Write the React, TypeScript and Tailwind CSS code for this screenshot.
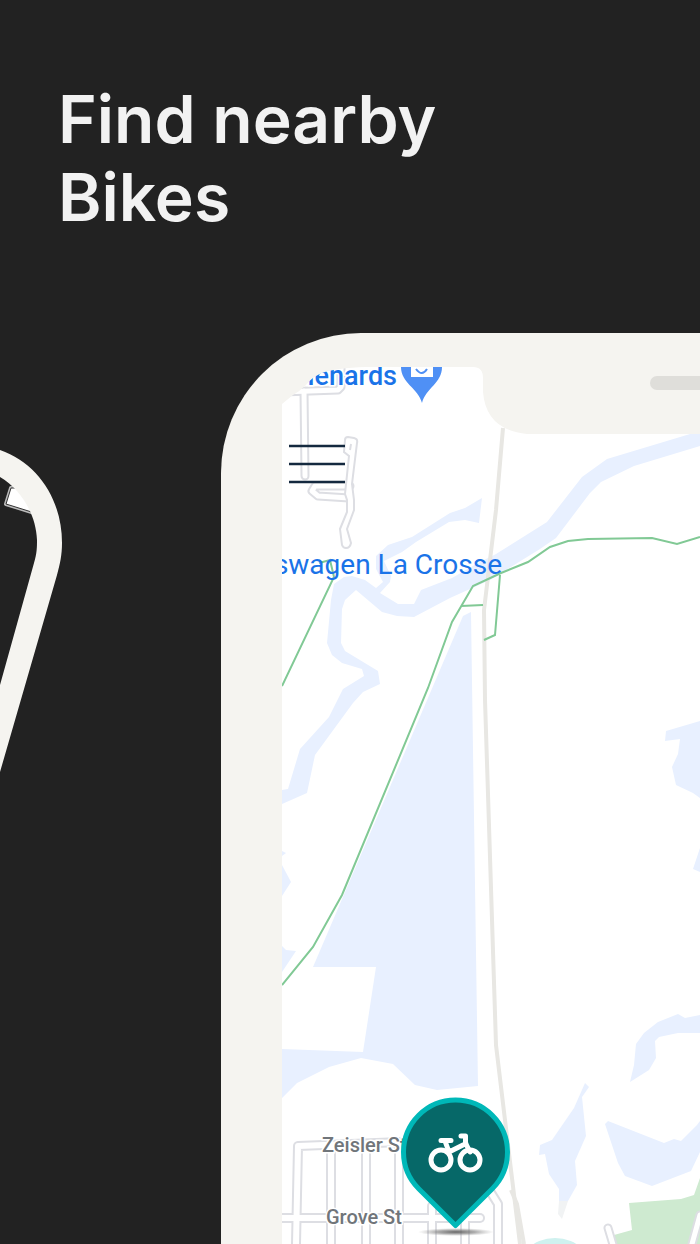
const WATER = "#e8f0ff";
const TRAIL = "#81c995";
const ROAD = "#e8e7e3";
const STREET = "#dddee3";
const BEZEL = "#f5f4f0";

const waterShapes = [
    "M482 498 479 523 465 520 449 522 416 542 402 552 384 561 391 576 390 582 380 593 398 604 414 604 421 590 452 578 478 563 496 554 547 522 582 477 607 459 700 431V446L634 466 601 482 590 493 556 538 540 549 490 580 450 598 414 617 397 616 382 612 356 590 345 600 342 609 341 643 345 651 378 671 380 684 363 692 353 703 315 755 307 793 282 804V790L288 789 300 749 329 717 343 689 364 676 362 669 342 663 332 655 327 643 331 600 334 584 344 577 352 576 365 580 376 588 383 582 376 569 376 556 388 545 412 537 450 513 465 508Z",
    "M463 616 471 612 473 750 478 1086 437 1090 415 1085 393 1064 361 1058 329 1067 297 1083 282 1098V1049L363 1052 376 967H313Z",
    "M282 865 291 882 282 896Z",
    "M282 946 286 950 296 951 282 972Z",
    "M282 851 286 853 282 856Z",
    "M700 721 666 731 665 741 680 739 678 754 672 767 676 785 693 793 700 798Z",
    "M700 848 693 869 700 872Z",
    "M700 1015 685 1018 678 1014 658 1022 644 1033 636 1044 634 1065 630 1082 649 1070 656 1058 655 1041 659 1037 678 1033H700Z",
    "M700 1121 697 1125 681 1141 674 1139 664 1143 608 1121 605 1124 618 1163 625 1176 652 1186 691 1171 700 1152Z",
    "M585 1083 589 1087 582 1097 586 1136 575 1161 577 1185 568 1201H559V1189L549 1174 545 1154 539 1155 540 1145 552 1140 574 1108Z",
];

const trails = [
    "M319 563 330 560 334 577 282 686",
    "M282 985 313 947 342 895 428 688 452 622 473 586 501 573 528 562 550 547 568 541 588 539 652 538 677 544 700 537",
    "M461 606 483 605",
    "M500 575 495 635 484 640",
];

const parkingRoads = [
    "M282 392 338 390 341 387V366",
    "M304 391 305 476",
    "M350 486H315L312 491 318 496 349 498",
];

const parkingLoop =
    "M345 440Q345 437 348 437L354 438Q358 439 357 443L352 484 354 500V510L347 529 351 543Q350 548 346 548 343 548 342 545L340 529 347 512V500L345 494 349 456 344 452Z";

const blockStreets = [
    "M282 1218H480",
    "M296 1244 298 1146 402 1142",
    "M331 1146V1244",
    "M366 1146V1244",
    "M399 1146V1244",
    "M432 1206V1244",
    "M465 1220V1244",
    "M488 1188 498 1204V1244",
];

function StreetGroup({ paths, width }: { paths: string[]; width: number }) {
    return (
        <g fill="none" strokeLinecap="round" strokeLinejoin="round">
            {paths.map((d) => (
                <path key={d} d={d} stroke={STREET} strokeWidth={width} />
            ))}
            {paths.map((d) => (
                <path key={d} d={d} stroke="#fff" strokeWidth={width - 4} />
            ))}
        </g>
    );
}

function BikePin() {
    return (
        <g>
            <ellipse cx="456" cy="1232" rx="38" ry="4" fill="url(#pinShadow)" />
            <path
                d="M418.700 1188.800A52 52 0 1 1 492.300 1188.800L455.500 1225.500Z"
                fill="#066868"
                stroke="#00b8b8"
                strokeWidth="5"
                strokeLinejoin="round"
            />
            <g
                fill="none"
                stroke="#fff"
                strokeWidth="5"
                strokeLinecap="round"
                strokeLinejoin="round"
            >
                <circle cx="441" cy="1160" r="10" />
                <circle cx="470" cy="1160" r="10" />
                <path d="M441 1140.500H451M445 1141 449 1152 466 1143.500M461 1136H465.500V1143L470 1152" />
            </g>
        </g>
    );
}

function MapView() {
    return (
        <svg
            viewBox="282 367 418 877"
            className="block h-[877px] w-[418px] bg-white"
            role="img"
            aria-label="Map of La Crosse"
        >
            <defs>
                <radialGradient id="pinShadow">
                    <stop offset="0" stopColor="#555" stopOpacity="0.9" />
                    <stop offset="0.5" stopColor="#777" stopOpacity="0.6" />
                    <stop offset="1" stopColor="#999" stopOpacity="0" />
                </radialGradient>
            </defs>

            {waterShapes.map((d) => (
                <path key={d} d={d} fill={WATER} />
            ))}
            <path d="M559 1201H568L562 1219 558 1214Z" fill="#f1f3f4" />
            <path
                d="M629 1203 681 1199 694 1195 700 1178V1244H614V1235L632 1230Z"
                fill="#ceead0"
            />
            <circle cx="555" cy="1279" r="41" fill="#cff1ef" />

            <StreetGroup paths={parkingRoads} width={9} />
            <path d={parkingLoop} fill="#fff" stroke={STREET} strokeWidth="2" />
            <path d="M351 444 350 450" stroke={STREET} strokeWidth="2" />
            <StreetGroup paths={blockStreets} width={10} />
            <StreetGroup paths={["M608 1228 614 1248", "M700 1215 692 1244"]} width={9} />

            <g fill="none" stroke={ROAD} strokeWidth="4">
                <path d="M503 428 496 510 484 610 485 700 496 1045 511 1170 520 1244" />
                <path d="M511 1190 517 1204 524 1244" />
            </g>
            <g fill="none" stroke={TRAIL} strokeWidth="2">
                {trails.map((d) => (
                    <path key={d} d={d} />
                ))}
            </g>

            <g className="font-['Roboto',sans-serif]" stroke="#fff" strokeWidth="3" paintOrder="stroke">
                <g fill="#1a73e8" textAnchor="end">
                    <text x="397" y="385" className="text-[27px] font-medium">
                        Menards
                    </text>
                    <text x="502" y="574" className="text-[28px]" stroke="none">
                        swagen La Crosse
                    </text>
                </g>
                <g fill="#70757a" className="text-[20px] font-medium">
                    <text x="322" y="1152">
                        Zeisler St
                    </text>
                    <text x="326" y="1224">
                        Grove St
                    </text>
                </g>
            </g>

            <path d="M401 367H442C442 383 426 388 422 403 418 388 401 383 401 367Z" fill="#4f90f5" />
            <path d="M411 367H433V377H411Z" fill="#fff" />
            <path d="M416 369Q422 377 427 369" fill="none" stroke="#4f90f5" strokeWidth="2" />

            <BikePin />

            {/* screen corner and notch */}
            <path d="M282 367H366Q336 368 322 373 312 377 306 385 300 391 293 395L282 404Z" fill={BEZEL} />
            <path d="M473 367Q483 367 483 378V392Q486 430 527 434H700V367Z" fill={BEZEL} />
            <rect x="650" y="376" width="80" height="14" rx="7" fill="#dfdeda" />
        </svg>
    );
}

function TiltedPhone() {
    return (
        <svg viewBox="0 440 221 340" className="block h-[340px] w-[221px]" aria-hidden="true">
            <g fill="#fff" strokeLinejoin="round">
                <path d="M35 488 11 488 6 504 38 514" stroke="#bbb" strokeWidth="4" />
                <path d="M35 488 11 488 6 504 38 514" stroke="#333" strokeWidth="1" />
            </g>
            <path
                d="M0 450C38 463 62 500 62 543 62 555 60 564 57 575L0 772V685L34 563C37 553 37 547 37 540 36 515 22 490 0 477Z"
                fill={BEZEL}
            />
        </svg>
    );
}

export default function App() {
    return (
        <main className="flex min-h-screen flex-col overflow-hidden bg-[#222222]">
            <h1 className="h-[333px] px-[58px] pt-20 font-['Inter',sans-serif] text-[66px] leading-[78px] font-semibold text-[#f2f2f2]">
                Find nearby
                <br />
                Bikes
            </h1>

            <div className="flex flex-1">
                <div className="w-[221px] shrink-0 pt-[107px]">
                    <TiltedPhone />
                </div>

                <section className="min-w-0 flex-1 overflow-hidden rounded-tl-[140px] bg-[#f5f4f0] pt-[34px] pl-[61px]">
                    <div className="relative bg-white">
                        <MapView />
                        <button
                            type="button"
                            aria-label="Open menu"
                            className="absolute top-[77px] left-[7px] h-10 w-14"
                        >
                            <svg viewBox="0 0 56 40" className="h-full w-full">
                                <path d="M0 2H56M0 20H56M0 38H56" stroke="#14293f" strokeWidth="2.5" />
                            </svg>
                        </button>
                    </div>
                </section>
            </div>
        </main>
    );
}
